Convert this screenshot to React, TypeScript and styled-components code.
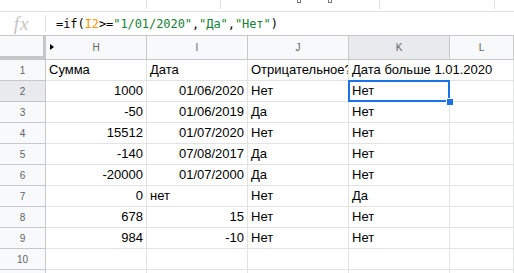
import { Fragment } from "react";
import styled, { createGlobalStyle } from "styled-components";

const GlobalStyle = createGlobalStyle`
  html, body {
    margin: 0;
    padding: 0;
    background: #ffffff;
    overflow: hidden;
  }
  body {
    font-family: "Liberation Sans", Arial, sans-serif;
  }
`;

const Page = styled.div`
  width: 514px;
  height: 273px;
  overflow: hidden;
  background: #fff;
`;

const ToolbarEdge = styled.div`
  height: 11px;
  display: flex;
  border-bottom: 1px solid #e1e1e1;
`;

const ToolSlot = styled.div<{ $w: number }>`
  width: ${(p) => p.$w}px;
  flex-shrink: 0;
`;

const ToolSep = styled.div`
  width: 1px;
  height: 9px;
  background: #e0e0e0;
  flex-shrink: 0;
`;

const ToolStub = styled.div`
  width: 4px;
  height: 3px;
  border-bottom: 1px solid #777;
  border-left: 1px solid #777;
  border-right: 1px solid #777;
  box-sizing: border-box;
`;

const FormulaBar = styled.div`
  height: 23px;
  display: flex;
  align-items: center;
  border-bottom: 1px solid #c7c7c7;
`;

const FxIcon = styled.div`
  width: 45px;
  display: flex;
  justify-content: center;
  font-family: "Liberation Serif", "Times New Roman", serif;
  font-style: italic;
  font-size: 19px;
  color: #c4c4c4;
  letter-spacing: 1px;
  padding-right: 2px;
  box-sizing: border-box;
`;

const FxDivider = styled.div`
  width: 1px;
  height: 17px;
  background: #e0e0e0;
  margin-right: 10px;
`;

const FormulaText = styled.div`
  font-family: "DejaVu Sans Mono", "Liberation Mono", monospace;
  font-size: 12px;
  color: #000;
  white-space: pre;
  letter-spacing: -0.07px;
`;

const Token = styled.span<{ $kind?: "ref" | "str" }>`
  color: ${(p) =>
    p.$kind === "ref" ? "#f29900" : p.$kind === "str" ? "#188038" : "#000"};
`;

const Grid = styled.div`
  display: grid;
  grid-template-columns: 46px repeat(4, 101px) 1fr;
  grid-auto-rows: 21px;
  grid-template-rows: 24px;
`;

const Corner = styled.div`
  background: #f8f9fa;
  border-right: 4px solid #c4c7c5;
  border-bottom: 4px solid #c4c7c5;
  margin-right: -1px;
`;

const ColHeader = styled.div<{ $active?: boolean }>`
  position: relative;
  background: ${(p) => (p.$active ? "#e8eaed" : "#f8f9fa")};
  border-right: 1px solid #c7c7c7;
  border-bottom: 1px solid #c7c7c7;
  display: flex;
  align-items: center;
  justify-content: center;
  font-size: 10px;
  color: #5f6368;
`;

const HiddenMark = styled.div`
  position: absolute;
  left: 4px;
  top: 8px;
  width: 0;
  height: 0;
  border-top: 3.5px solid transparent;
  border-bottom: 3.5px solid transparent;
  border-left: 4px solid #000;
`;

const RowHeader = styled.div<{ $active?: boolean }>`
  background: ${(p) => (p.$active ? "#e8eaed" : "#f8f9fa")};
  border-right: 1px solid #c7c7c7;
  border-bottom: 1px solid #c7c7c7;
  display: flex;
  align-items: center;
  justify-content: center;
  font-size: 10px;
  color: #5f6368;
  padding-top: 1px;
  box-sizing: border-box;
`;

const Cell = styled.div<{
  $align: "left" | "right";
  $selected?: boolean;
  $spill?: boolean;
}>`
  position: relative;
  border-right: 1px solid ${(p) => (p.$spill ? "transparent" : "#e2e3e3")};
  border-bottom: 1px solid #e2e3e3;
  padding: 0 3px;
  font-size: 13px;
  line-height: 20px;
  color: #000;
  text-align: ${(p) => p.$align};
  white-space: nowrap;
  overflow: ${(p) => (p.$selected || p.$spill ? "visible" : "hidden")};
  z-index: ${(p) => (p.$selected ? 2 : p.$spill ? 1 : 0)};

  ${(p) =>
    p.$selected &&
    `
    &::after {
      content: "";
      position: absolute;
      left: -1px;
      top: -1px;
      right: -1px;
      bottom: -1px;
      border: 2px solid #1a73e8;
    }
    &::before {
      content: "";
      position: absolute;
      right: -4px;
      bottom: -4px;
      width: 6px;
      height: 6px;
      background: #1a73e8;
      border: 1px solid #fff;
      border-right: none;
      border-bottom: none;
      z-index: 3;
    }
  `}
`;

type Val = string | number;

const data: Val[][] = [
  ["Сумма", "Дата", "Отрицательное?", "Дата больше 1.01.2020"],
  [1000, "01/06/2020", "Нет", "Нет"],
  [-50, "01/06/2019", "Да", "Нет"],
  [15512, "01/07/2020", "Нет", "Нет"],
  [-140, "07/08/2017", "Да", "Нет"],
  [-20000, "01/07/2000", "Да", "Нет"],
  [0, "нет", "Нет", "Да"],
  [678, 15, "Нет", "Нет"],
  [984, -10, "Нет", "Нет"],
  ["", "", "", ""],
  ["", "", "", ""],
];

// dates count as numbers in sheets, so they sit on the right
const isNumeric = (v: Val) =>
  typeof v === "number" || /^\d{2}\/\d{2}\/\d{4}$/.test(v);

const columns = ["H", "I", "J", "K", "L"];

export default function App() {
  return (
    <Page>
      <GlobalStyle />
      <ToolbarEdge>
        <ToolSlot $w={146} />
        <ToolSep />
        <ToolSlot $w={73} />
        <ToolSep />
        <ToolSlot $w={76} />
        <ToolStub />
        <ToolSlot $w={27} />
        <ToolStub />
        <ToolSlot $w={47} />
        <ToolSep />
        <ToolSlot $w={114} />
        <ToolSep />
      </ToolbarEdge>
      <FormulaBar>
        <FxIcon>fx</FxIcon>
        <FxDivider />
        <FormulaText>
          =if(<Token $kind="ref">I2</Token>&gt;=
          <Token $kind="str">"1/01/2020"</Token>,
          <Token $kind="str">"Да"</Token>,
          <Token $kind="str">"Нет"</Token>)
        </FormulaText>
      </FormulaBar>
      <Grid>
        <Corner />
        {columns.map((c, i) => (
          <ColHeader key={c} $active={c === "K"}>
            {i === 0 && <HiddenMark />}
            {c}
          </ColHeader>
        ))}
        {data.map((row, r) => (
          <Fragment key={r}>
            <RowHeader $active={r === 1}>{r < 10 ? r + 1 : ""}</RowHeader>
            {row.map((v, c) => (
              <Cell
                key={c}
                $align={isNumeric(v) ? "right" : "left"}
                $selected={r === 1 && c === 3}
                $spill={c === 3 && r === 0}
              >
                {v}
              </Cell>
            ))}
            <Cell $align="left" />
          </Fragment>
        ))}
      </Grid>
    </Page>
  );
}
